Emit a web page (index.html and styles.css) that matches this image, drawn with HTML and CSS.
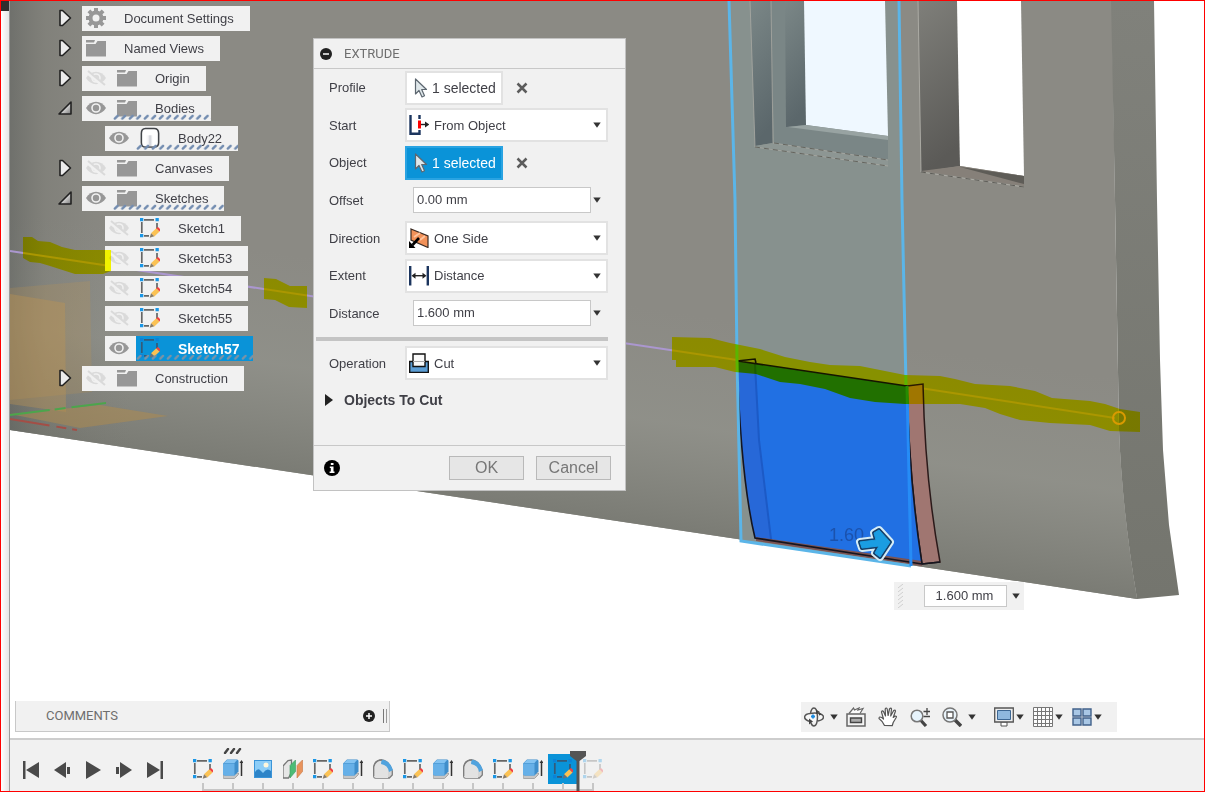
FILE: index.html
```html
<!DOCTYPE html>
<html lang="en">
  <head>
    <meta charset="UTF-8" />
    <meta name="viewport" content="width=device-width, initial-scale=1.0" />
    <title>Extrude</title>
    <link rel="stylesheet" href="styles.css">
  </head>
  <body>
    <!-- Icon definitions -->
    <svg class="defs" aria-hidden="true">
      <defs>
        <linearGradient id="arrowFill" x1="0" y1="0" x2="1" y2="1">
          <stop offset="0.4" stop-color="#eee" />
          <stop offset="1" stop-color="#777" />
        </linearGradient>
        <linearGradient id="bodyFill" x1="0" y1="0" x2="1" y2="0">
          <stop offset="0" stop-color="#fff" />
          <stop offset="0.3" stop-color="#f4f4f6" />
          <stop offset="0.5" stop-color="#cfd1d8" />
          <stop offset="0.8" stop-color="#fff" />
        </linearGradient>
        <pattern id="hatch" width="7.5" height="6" patternUnits="userSpaceOnUse">
          <path d="M1.8 4.6 4.6 1.8" stroke="#728cb0" stroke-width="2.4" stroke-linecap="round" />
        </pattern>
        <pattern id="hatchGray" width="7.5" height="6" patternUnits="userSpaceOnUse">
          <path d="M1.8 4.6 4.6 1.8" stroke="#7c93a5" stroke-width="2.2" stroke-linecap="round" />
        </pattern>
      </defs>
      <symbol id="i-closed" viewBox="0 0 14 18">
        <path d="M2 1.5h2.5L12.500 9 4.500 16.500H2z" fill="#ececec" stroke="#222" stroke-width="1.6" stroke-linejoin="round" />
      </symbol>
      <symbol id="i-open" viewBox="0 0 14 18">
        <path d="M13 3v12H1z" fill="url(#arrowFill)" stroke="#222" stroke-width="1.6" stroke-linejoin="round" />
      </symbol>
      <symbol id="i-gear" viewBox="0 0 20 20">
        <circle cx="10" cy="10" r="5.5" fill="none" stroke="#979797" stroke-width="4" />
        <g stroke="#979797" stroke-width="4">
          <path d="M10 0v4M10 16v4M0 10h4M16 10h4M2.9 2.9l3 3M14.1 14.1l3 3M2.9 17.1l3-3M14.1 5.9l3-3" />
        </g>
      </symbol>
      <symbol id="i-folder" viewBox="0 0 20 20">
        <path d="M0 6h9.500l2-3H20v15.500H0z" fill="#979797" />
        <path d="M0 2h9L8 4.500H0z" fill="#979797" />
      </symbol>
      <symbol id="i-eye" viewBox="0 0 20 20">
        <path d="M0 10C5 1.800 15 1.800 20 10 15 18.200 5 18.200 0 10z" fill="#979797" />
        <circle cx="10" cy="10" r="4" fill="none" stroke="#f1f1f1" stroke-width="1.6" />
      </symbol>
      <symbol id="i-eye-off" viewBox="0 0 20 20">
        <path d="M0 10C5 1.800 15 1.800 20 10 15 18.200 5 18.200 0 10z" fill="#dadada" />
        <circle cx="10" cy="10" r="4" fill="none" stroke="#f1f1f1" stroke-width="1.6" />
        <path d="M1 4 18 18" stroke="#f1f1f1" stroke-width="4" />
        <path d="M2 3 19 17" stroke="#dadada" stroke-width="2" />
      </symbol>
      <symbol id="i-body" viewBox="0 0 22 24">
        <path d="M6 1.500h9.500Q20.500 1.500 20.500 7v10q0 5-5 5H6q-4.500 0-4.500-5V7Q1.500 1.500 6 1.500z" fill="#fff" stroke="#414449" stroke-width="1.7" />
        <path d="M6 9h10v12H6z" fill="url(#bodyFill)" />
      </symbol>
      <symbol id="i-sketch" viewBox="0 0 20 20">
        <path d="M4 1.800h10M1.800 4v11M17 5v6M4 17.800h5" fill="none" stroke="#666" stroke-width="1.7" />
        <path d="M0 0h3.300v3.300H0zM15.500 0h3.300v3.300h-3.300zM0 16h3.300v3.300H0z" fill="#1996e6" />
        <path d="m11 15.300 5.300-5 3.300 3.300-5.300 5z" fill="#fbc254" />
        <path d="m16.300 10.300 1.700-1.200 2.500 2.500-1 2z" fill="#f33f3f" />
        <path d="m11 15.300-1.300 4.500 4.600-1.500z" fill="#8a7c68" />
      </symbol>
      <symbol id="i-sketch-dark" viewBox="0 0 20 20">
        <path d="M4 1.800h10M1.800 4v11M17 5v6M4 17.800h5" fill="none" stroke="#355a78" stroke-width="1.7" />
        <path d="M0 0h3.300v3.300H0zM15.500 0h3.300v3.300h-3.300zM0 16h3.300v3.300H0z" fill="#0a82d8" />
        <path d="m11 15.300 5.300-5 3.300 3.300-5.300 5z" fill="#fbc254" />
        <path d="m16.300 10.300 1.700-1.200 2.500 2.500-1 2z" fill="#f33f3f" />
        <path d="m11 15.300-1.300 4.500 4.600-1.500z" fill="#6a7078" />
      </symbol>
      <symbol id="i-extrude" viewBox="0 0 20 20">
        <path d="M0 16v2.500q0 1 1 1h10.500l4-4V14z" fill="#c6c6c6" stroke="#999" stroke-width="0.8" />
        <path d="M0 4.500 4 0.500h10q1.500 0 1.500 1.500v10.500l-4 4H2q-2 0-2-2z" fill="#3f8ecb" />
        <path d="M0 5.500Q0 4.500 1 4.500h10.500v12H2q-2 0-2-2z" fill="#66b0e8" />
        <path d="M1 4 4 1h10l-2.500 3z" fill="#83c3f2" />
        <path d="M18.500 3v14" stroke="#333" stroke-width="1.5" />
        <path d="m16.500 4 2-3 2 3z" fill="#333" />
      </symbol>
      <symbol id="i-canvas" viewBox="0 0 20 20">
        <path d="M1 1h18v18H1z" fill="#3a94d8" />
        <path d="M2 2h16v13H2z" fill="#8ccdf7" />
        <path d="M2 13q3-5 6-1l2 2q4-6 8-2v6H2z" fill="#2d84c8" />
        <circle cx="13" cy="6" r="2.5" fill="#fff7dc" />
      </symbol>
      <symbol id="i-plane" viewBox="0 0 20 20">
        <path d="M0 7 5 1.500 8.500 1v12l-3 6H0z" fill="#e6e6e6" stroke="#777" stroke-width="1.3" />
        <path d="M7 6.500 12.500 1v11.500L7 19z" fill="#4dbc76" stroke="#3a9a5f" stroke-width="0.6" />
        <path d="M14 6.500 19.500 1v11.500L14 19z" fill="#e9935c" stroke="#c87640" stroke-width="0.6" />
      </symbol>
      <symbol id="i-fillet" viewBox="0 0 20 20">
        <path d="M0.700 17V8Q2 1 9 1q7 1 10.300 11v4l-3 3H2.500q-1.800 0-1.800-2z" fill="#d5d5d5" stroke="#7d7d7d" stroke-width="1.3" />
        <path d="M1 7q3-6 9-6l5 8v10H3q-2 0-2-2z" fill="#e2e2e2" />
        <path d="M8.500 0.700Q17 1 20 11l-4 2Q15 6 8 5z" fill="#51a3de" />
        <path d="M0.700 17V8Q2 1 9 1" fill="none" stroke="#7d7d7d" stroke-width="1.3" />
      </symbol>
      <symbol id="i-caret" viewBox="0 0 8 6">
        <path d="M0.300 0.500h7.400L4 5.700z" fill="#333" />
      </symbol>
      <symbol id="i-cursor" viewBox="0 0 14 20">
        <path d="M1.500 1v15l3.500-3.500 3 6.500 2.500-1.200-2.800-6.300h4.800z" fill="#dfe7ea" stroke="#5d6770" stroke-width="1.2" stroke-linejoin="round" />
      </symbol>
      <symbol id="i-x" viewBox="0 0 12 12">
        <path d="m1.500 1.500 9 9M10.500 1.500l-9 9" stroke="#5c5c5c" stroke-width="2.5" />
      </symbol>
      <symbol id="i-from-object" viewBox="0 0 20 20">
        <path d="M1.500 0v18.800h9V15M10.500 0v4" fill="none" stroke="#1c355e" stroke-width="2.4" />
        <path d="M10.500 5.500v8" stroke="#f00" stroke-width="3" />
        <path d="M12 9.500h5" stroke="#222" stroke-width="1.4" />
        <path d="m16 6.500 4.500 3-4.500 3z" fill="#222" />
      </symbol>
      <symbol id="i-one-side" viewBox="0 0 20 20">
        <path d="m2 1 17 7v11.500L2 12z" fill="#f29158" stroke="#3a2a22" stroke-width="1.2" />
        <path d="m5 9 6-4M11 12l5-4" stroke="#ffc49d" stroke-width="2" />
        <path d="m10 10-6.500 7" stroke="#000" stroke-width="2.6" />
        <path d="M0 20v-7l6.500 7z" fill="#000" />
      </symbol>
      <symbol id="i-distance" viewBox="0 0 20 20">
        <path d="M1.200 0v19.500M18.800 0v19.500" stroke="#1c355e" stroke-width="2.4" />
        <path d="M4 9.700h12" stroke="#222" stroke-width="1.4" />
        <path d="m2.500 9.700 4-3v6zM17.500 9.700l-4-3v6z" fill="#222" />
      </symbol>
      <symbol id="i-cut" viewBox="0 0 20 20">
        <path d="M0.700 8.500h18.600v11H0.700z" fill="#5b9dd4" stroke="#111" stroke-width="1.4" />
        <path d="M4 1h12v12.500H4z" fill="#fafafa" stroke="#111" stroke-width="1.4" />
        <path d="M4 8.500h12" stroke="#aaa" />
      </symbol>
      <symbol id="i-orbit" viewBox="0 0 20 20">
        <path d="M6 14.500Q0.500 13 .6 10 1 7 6 6.500q5-1 9 0 4.500 1 4.500 3.500 0 3-5.500 4" fill="#f8f8f8" stroke="#555" stroke-width="1.5" />
        <path d="M6.500 6Q7.500 1 10 1q3 0 3.500 8.500 0 9-3.500 9.500-2 0-3-3" fill="none" stroke="#555" stroke-width="1.5" />
        <path d="m5 11.500 4 3-4 3zM12 2.500l4 2.500-4 2zM15 5l3 2.500-3 1z" fill="#444" />
        <path d="M9 7.500v4M7 9.500h4" stroke="#1b8ae0" stroke-width="1.8" />
      </symbol>
      <symbol id="i-look" viewBox="0 0 20 20">
        <path d="M3 6.500 7.500 1l1 2L13 1l-1 2 5-1.500-3 5" fill="#fafafa" stroke="#666" stroke-width="1.2" />
        <path d="M1 7h18v12H1z" fill="#f4f4f4" stroke="#666" stroke-width="1.5" />
        <path d="M4.500 11h11v4.500h-11z" fill="#aaa" stroke="#444" stroke-width="1.4" />
      </symbol>
      <symbol id="i-hand" viewBox="0 0 20 20">
        <path d="M6.500 18.500Q4.500 14 1 11.500q0-2.500 2.800-.9L5.500 12 3.500 5q.5-2 2-.5L7.500 9l-.3-7q1-2 2 0l.9 6.500L11.500 2q1.500-1.800 2 0L12.700 9l3-5.500q1.500-1 1.800.5l-2.300 6.500 2-1.500q1.800 0 1 1.500l-3 5-1 3.200z" fill="#fff" stroke="#555" stroke-width="1.2" stroke-linejoin="round" />
      </symbol>
      <symbol id="i-zoom" viewBox="0 0 20 20">
        <path d="m10.500 13 5.500 6" stroke="#444" stroke-width="3.2" />
        <circle cx="7" cy="9" r="5.800" fill="#e6f3fc" stroke="#777" stroke-width="1.5" />
        <path d="M17 1v7M13.500 4.500h7M13.500 9.500h7" stroke="#444" stroke-width="1.3" />
      </symbol>
      <symbol id="i-fit" viewBox="0 0 20 20">
        <path d="m13 13 6 6" stroke="#444" stroke-width="3.5" />
        <circle cx="8" cy="8" r="7" fill="#e9f3fa" stroke="#777" stroke-width="1.5" />
        <path d="M5 5h6v6H5z" fill="#fff" stroke="#555" stroke-width="1.3" />
      </symbol>
      <symbol id="i-display" viewBox="0 0 20 20">
        <path d="M7 15h6v4H7z" fill="#fff" stroke="#555" />
        <path d="M0.700 1h18.600v14H0.700z" fill="#eee" stroke="#555" stroke-width="1.3" />
        <path d="M3.500 3.500h13v9h-13z" fill="#8fb8de" stroke="#3d6793" />
      </symbol>
      <symbol id="i-grid" viewBox="0 0 20 20">
        <path d="M0.500 0.500h19v19h-19z" fill="#fdfdfd" />
        <path d="M0.500 0.500h19v19h-19zM4.500 0v20M8.500 0v20M12.500 0v20M16.500 0v20M0 4.500h20M0 8.500h20M0 12.500h20M0 16.500h20" fill="none" stroke="#777" />
      </symbol>
      <symbol id="i-views" viewBox="0 0 20 20">
        <path d="M1 2h8v7H1zM11 2h8v7h-8zM1 11h8v7H1zM11 11h8v7h-8z" fill="#a9c7e5" stroke="#41618a" stroke-width="1.4" />
      </symbol>
    </svg>

    <div class="app">
      <div class="edge"></div>
      <main class="main">
        <div class="viewport">
          <!-- 3D model -->
          <svg class="scene" viewBox="10 1 1194 737" preserveAspectRatio="xMinYMin slice">
            <defs>
              <linearGradient id="wallEdge" x1="0" y1="0" x2="1" y2="0">
                <stop offset="0" stop-color="#585b58" stop-opacity="0.55" />
                <stop offset="0.3" stop-color="#64665f" stop-opacity="0.25" />
                <stop offset="1" stop-color="#6f716c" stop-opacity="0" />
              </linearGradient>
              <linearGradient id="wallFoot" gradientUnits="userSpaceOnUse" x1="600" y1="300" x2="567" y2="520">
                <stop offset="0" stop-color="#90918a" stop-opacity="0" />
                <stop offset="0.5" stop-color="#90918a" stop-opacity="0.8" />
                <stop offset="1" stop-color="#797a73" />
              </linearGradient>
              <linearGradient id="side" x1="0" y1="0" x2="0" y2="1">
                <stop offset="0" stop-color="#80817b" />
                <stop offset="1" stop-color="#74756e" />
              </linearGradient>
              <linearGradient id="jamb" x1="0" y1="0" x2="0.2" y2="1">
                <stop offset="0" stop-color="#7f7f7a" />
                <stop offset="1" stop-color="#5b5a57" />
              </linearGradient>
              <linearGradient id="jambBlue" x1="0" y1="0" x2="0.2" y2="1">
                <stop offset="0" stop-color="#7b8787" />
                <stop offset="1" stop-color="#5b676b" />
              </linearGradient>
            </defs>
            <path d="M10 1H1112L1115 200 1119 430Q1122 510 1137 599L10 430z" fill="#8b8a84" />
            <path d="M10 1H1112L1115 200 1119 430Q1122 510 1137 599L10 430z" fill="url(#wallFoot)" />
            <path d="M10 1h120v447L10 430z" fill="url(#wallEdge)" />
            <path d="M1111 1h43l3 199 3 160 3 90 6 75 10 70-42 4Q1122 510 1119 430L1115 200z" fill="url(#side)" />

            <!-- origin planes and axes -->
            <path d="m10 288 80-7 2 111-82 8z" fill="#c2974f" fill-opacity="0.22" />
            <path d="m10 294 55 9 1 109-56-8z" fill="#c2974f" fill-opacity="0.36" />
            <path d="m10 414 90-9 68 11-88 12z" fill="#b18c4c" fill-opacity="0.5" />
            <path d="m10 415 96-12" stroke="#4ca54c" stroke-width="2" stroke-dasharray="40 5 11 6" />
            <path d="m10 419 67 11" stroke="#a34e46" stroke-width="2" stroke-dasharray="40 7 10 6" />

            <!-- selected profile region -->
            <path d="M729 1h170l3 199 3 130 5 236-169-25-4-211-2-130z" fill="#87918e" />

            <!-- windows -->
            <path d="M750 1h22l1 142-18 3z" fill="url(#jambBlue)" />
            <path d="M771 1h15l2 126 18-2 82 12v23l-114-17z" fill="#7a8686" />
            <path d="M785 1h20l1 124-20 2z" fill="url(#jambBlue)" />
            <path d="M804 1h81l3 135-82-11z" fill="#eff8ff" />
            <path d="m788 127 18-2 82 11v4z" fill="#98a3a2" />
            <path d="m755 146 18-3 115 17v6z" fill="#8d9693" />
            <path d="M750 1 755 147l133 19M771 1l2 142 115 17" fill="none" stroke="#a9aaa3" stroke-width="0.8" />
            <path d="m755 147 133 19M774 143l114 17" fill="none" stroke="#55564f" stroke-width="0.8" stroke-dasharray="5 4" />
            <path d="M918 1h39l3 165-39 6z" fill="url(#jamb)" />
            <path d="M957 1h64l3 175-64-10z" fill="#fff" />
            <path d="m921 171 39-5 64 10v10z" fill="#868079" />
            <path d="m960 167 64 9v8z" fill="#5e5c57" />
            <path d="m918 1 3 171 103 15" fill="none" stroke="#b0afa8" stroke-width="0.9" />
            <path d="m921 172 103 15" fill="none" stroke="#55544f" stroke-width="0.9" stroke-dasharray="5 4" />

            <!-- sketch line -->
            <path d="m10 251 727 109M907 386l208 32" fill="none" stroke="#ab97cf" stroke-width="2" />
            <circle cx="1119" cy="418" r="6" fill="none" stroke="#d99a45" stroke-width="2" />

            <!-- extruded body -->
            <path d="m907 386 16-2Q925 480 940 562l-18 2Q909 480 907 386z" fill="#a07671" stroke="#2b1a1a" stroke-width="1.5" />
            <path d="m737 361 170 25Q909 480 922 564L755 538Q741 480 737 361z" fill="#2170e3" />
            <path d="m755 364 4 76 12 99-16-1Q741 480 737 361z" fill="#2768d8" />
            <path d="m755 364 4 76 12 99" fill="none" stroke="#1c5ac6" stroke-width="2" />
            <path d="m756 537 166 24v5l-166-25z" fill="#7b5454" />
            <path d="M737 361Q741 480 755 538l167 26 18-2M907 386Q909 480 922 564M737 361l18-2 1 4M738 361l169 25" fill="none" stroke="#15151f" stroke-width="1.6" />
            <path d="m729 1 6 199 2 160 4 181 170 25" fill="none" stroke="#5bb5e8" stroke-width="3" />
            <path d="m899 1 3 199 4 185" fill="none" stroke="#5bb5e8" stroke-width="3" />
            <path d="m907 386 4 180" fill="none" stroke="#268cf6" stroke-width="3" />
            <text class="scene-text" x="829" y="541">1.60</text>
            <g stroke-linejoin="round">
              <path id="grab" d="m860 542 16-2-2-7 5-3 11 12-10 15-5-4 4-7-17 2z" fill="none" stroke="#d5ecf6" stroke-width="8" />
              <path d="m860 542 16-2-2-7 5-3 11 12-10 15-5-4 4-7-17 2z" fill="#1a9de2" stroke="#153f69" stroke-width="4" />
              <path d="m860 542 16-2-2-7 5-3 11 12-10 15-5-4 4-7-17 2z" fill="#1a9de2" stroke="#1a9de2" stroke-width="1" />
            </g>
          </svg>

          <ul class="tree">
            <li class="node">
              <svg class="toggle"><use href="#i-closed" /></svg>
              <div class="pill"><svg class="icon"><use href="#i-gear" /></svg><span>Document Settings</span></div>
            </li>
            <li class="node">
              <svg class="toggle"><use href="#i-closed" /></svg>
              <div class="pill"><svg class="icon"><use href="#i-folder" /></svg><span>Named Views</span></div>
            </li>
            <li class="node">
              <svg class="toggle"><use href="#i-closed" /></svg>
              <div class="pill"><svg class="icon"><use href="#i-eye-off" /></svg><svg class="icon"><use href="#i-folder" /></svg><span>Origin</span></div>
            </li>
            <li class="node">
              <svg class="toggle"><use href="#i-open" /></svg>
              <div class="pill"><svg class="icon"><use href="#i-eye" /></svg><svg class="icon"><use href="#i-folder" /></svg><span>Bodies</span><svg class="hatch"><rect width="100%" height="6" fill="url(#hatch)" /></svg></div>
            </li>
            <li class="node child">
              <div class="pill"><svg class="icon"><use href="#i-eye" /></svg><svg class="icon icon-body"><use href="#i-body" /></svg><span>Body22</span><svg class="hatch"><rect width="100%" height="6" fill="url(#hatch)" /></svg></div>
            </li>
            <li class="node">
              <svg class="toggle"><use href="#i-closed" /></svg>
              <div class="pill"><svg class="icon"><use href="#i-eye-off" /></svg><svg class="icon"><use href="#i-folder" /></svg><span>Canvases</span></div>
            </li>
            <li class="node">
              <svg class="toggle"><use href="#i-open" /></svg>
              <div class="pill"><svg class="icon"><use href="#i-eye" /></svg><svg class="icon"><use href="#i-folder" /></svg><span>Sketches</span><svg class="hatch"><rect width="100%" height="6" fill="url(#hatch)" /></svg></div>
            </li>
            <li class="node child">
              <div class="pill"><svg class="icon"><use href="#i-eye-off" /></svg><svg class="icon"><use href="#i-sketch" /></svg><span>Sketch1</span></div>
            </li>
            <li class="node child">
              <div class="pill"><svg class="icon"><use href="#i-eye-off" /></svg><svg class="icon"><use href="#i-sketch" /></svg><span>Sketch53</span></div>
            </li>
            <li class="node child">
              <div class="pill"><svg class="icon"><use href="#i-eye-off" /></svg><svg class="icon"><use href="#i-sketch" /></svg><span>Sketch54</span></div>
            </li>
            <li class="node child">
              <div class="pill"><svg class="icon"><use href="#i-eye-off" /></svg><svg class="icon"><use href="#i-sketch" /></svg><span>Sketch55</span></div>
            </li>
            <li class="node child">
              <div class="pill selected"><svg class="icon"><use href="#i-eye" /></svg><svg class="icon"><use href="#i-sketch-dark" /></svg><span>Sketch57</span><svg class="hatch"><rect width="100%" height="6" fill="url(#hatchGray)" /></svg></div>
            </li>
            <li class="node">
              <svg class="toggle"><use href="#i-closed" /></svg>
              <div class="pill"><svg class="icon"><use href="#i-eye-off" /></svg><svg class="icon"><use href="#i-folder" /></svg><span>Construction</span></div>
            </li>
          </ul>

          <!-- marker pen strokes -->
          <svg class="scene marker" viewBox="10 1 1194 737" preserveAspectRatio="xMinYMin slice">
            <path d="M23 237h9l6 4 12 1 12 5 13 3h36v21l-8 3H75l-25-8-10-3-10-1-7-4z" />
            <path d="m264 278 12 1 14 7h17v22l-18-1-14-7-11-1z" />
            <path d="m672 337 38 1 20 5 30 6 25 8 25 5 20 3 30 1 25 5 20 4 35 1 15 3 20 5 35 2 25 5 17 7 38 3 15 3 15 5 20 3v20l-30-1-20-6-40-2-30-3-20-6-15-6-25-4h-55l-30-2-25-4-25-9-25-5-20-2-24-8-21-2-20-5h-39v-7h-4z" />
          </svg>

          <form class="dialog">
            <div class="dialog-head">
              <svg class="dot" viewBox="0 0 12 12"><circle cx="6" cy="6" r="6" fill="#222" /><path d="M3 6h6" stroke="#fff" stroke-width="1.5" /></svg>
              <h1>EXTRUDE</h1>
            </div>
            <div class="fields">
              <div class="field">
                <label for="profile">Profile</label>
                <button type="button" id="profile" class="pick"><svg><use href="#i-cursor" /></svg>1 selected</button>
                <button type="button" class="clear" aria-label="Clear profile"><svg><use href="#i-x" /></svg></button>
              </div>
              <div class="field">
                <label for="start">Start</label>
                <div class="combo"><svg class="icon"><use href="#i-from-object" /></svg><select id="start"><option>From Object</option></select><svg class="caret"><use href="#i-caret" /></svg></div>
              </div>
              <div class="field">
                <label for="object">Object</label>
                <button type="button" id="object" class="pick active"><svg><use href="#i-cursor" /></svg>1 selected</button>
                <button type="button" class="clear" aria-label="Clear object"><svg><use href="#i-x" /></svg></button>
              </div>
              <div class="field">
                <label for="offset">Offset</label>
                <input type="text" id="offset" value="0.00 mm"><svg class="caret"><use href="#i-caret" /></svg>
              </div>
              <div class="field">
                <label for="direction">Direction</label>
                <div class="combo"><svg class="icon"><use href="#i-one-side" /></svg><select id="direction"><option>One Side</option></select><svg class="caret"><use href="#i-caret" /></svg></div>
              </div>
              <div class="field">
                <label for="extent">Extent</label>
                <div class="combo"><svg class="icon"><use href="#i-distance" /></svg><select id="extent"><option>Distance</option></select><svg class="caret"><use href="#i-caret" /></svg></div>
              </div>
              <div class="field">
                <label for="distance">Distance</label>
                <input type="text" id="distance" value="1.600 mm"><svg class="caret"><use href="#i-caret" /></svg>
              </div>
            </div>
            <hr>
            <div class="field">
              <label for="operation">Operation</label>
              <div class="combo"><svg class="icon"><use href="#i-cut" /></svg><select id="operation"><option>Cut</option></select><svg class="caret"><use href="#i-caret" /></svg></div>
            </div>
            <button type="button" class="section">
              <svg viewBox="0 0 8 12"><path d="M0 0v12l8-6z" fill="#222" /></svg>
              Objects To Cut
            </button>
            <div class="dialog-foot">
              <svg class="info" viewBox="0 0 16 16"><circle cx="8" cy="8" r="8" fill="#000" /><path d="M6.800 3h2.700v2H6.800zM5.800 6.500h3.700v5h1v1.500H5.600v-1.500h1.200v-3.500h-1z" fill="#fff" /></svg>
              <button type="button" class="btn">OK</button>
              <button type="button" class="btn">Cancel</button>
            </div>
          </form>

          <div class="float-input">
            <svg class="grip" viewBox="0 0 6 24"><path d="m0 4 5-4M0 8l5-4M0 12l5-4M0 16l5-4M0 20l5-4M0 24l5-4" stroke="#cfcfcf" /></svg>
            <input type="text" value="1.600 mm" aria-label="Distance">
            <svg class="caret"><use href="#i-caret" /></svg>
          </div>

          <div class="bottom-bar">
            <div class="comments">
              <h2>COMMENTS</h2>
              <button type="button" aria-label="Add comment"><svg class="dot" viewBox="0 0 12 12"><circle cx="6" cy="6" r="6" fill="#222" /><path d="M3 6h6M6 3v6" stroke="#fff" stroke-width="1.5" /></svg></button>
              <span class="handle"></span>
            </div>
            <div class="nav">
              <button type="button" aria-label="Orbit"><svg class="icon"><use href="#i-orbit" /></svg><svg class="caret"><use href="#i-caret" /></svg></button>
              <div class="nav-group">
                <button type="button" aria-label="Look at"><svg class="icon"><use href="#i-look" /></svg></button>
                <button type="button" aria-label="Pan"><svg class="icon"><use href="#i-hand" /></svg></button>
                <button type="button" aria-label="Zoom"><svg class="icon"><use href="#i-zoom" /></svg></button>
                <button type="button" aria-label="Fit"><svg class="icon"><use href="#i-fit" /></svg><svg class="caret"><use href="#i-caret" /></svg></button>
              </div>
              <div class="nav-group tight">
                <button type="button" aria-label="Display settings"><svg class="icon"><use href="#i-display" /></svg><svg class="caret"><use href="#i-caret" /></svg></button>
                <button type="button" aria-label="Grid and snaps"><svg class="icon"><use href="#i-grid" /></svg><svg class="caret"><use href="#i-caret" /></svg></button>
                <button type="button" aria-label="Viewports"><svg class="icon"><use href="#i-views" /></svg><svg class="caret"><use href="#i-caret" /></svg></button>
              </div>
            </div>
          </div>
        </div>

        <div class="timeline">
          <div class="player">
            <button type="button" aria-label="First"><svg viewBox="0 0 16 18"><path d="M0 0h2.500v18H0zM16 1v16L3 9z" /></svg></button>
            <button type="button" aria-label="Previous"><svg viewBox="0 0 16 18"><path d="M12 1v16L0 9zM13 6h3v7h-3z" /></svg></button>
            <button type="button" aria-label="Play"><svg viewBox="0 0 16 18"><path d="M1 0v18l15-9z" /></svg></button>
            <button type="button" aria-label="Next"><svg viewBox="0 0 16 18"><path d="M4 1v16l12-8zM0 6h3v7H0z" /></svg></button>
            <button type="button" aria-label="Last"><svg viewBox="0 0 16 18"><path d="M13.500 0H16v18h-2.500zM0 1v16l13-8z" /></svg></button>
          </div>
          <ol class="features">
            <li><svg class="icon"><use href="#i-sketch" /></svg></li>
            <li><svg class="icon"><use href="#i-extrude" /></svg><svg class="ticks" viewBox="0 0 20 6"><path d="m2 5 3-4M8 5l3-4M14 5l3-4" stroke="#444" stroke-width="2.4" stroke-linecap="round" /></svg></li>
            <li><svg class="icon"><use href="#i-canvas" /></svg></li>
            <li><svg class="icon"><use href="#i-plane" /></svg></li>
            <li><svg class="icon"><use href="#i-sketch" /></svg></li>
            <li><svg class="icon"><use href="#i-extrude" /></svg></li>
            <li><svg class="icon"><use href="#i-fillet" /></svg></li>
            <li><svg class="icon"><use href="#i-sketch" /></svg></li>
            <li><svg class="icon"><use href="#i-extrude" /></svg></li>
            <li><svg class="icon"><use href="#i-fillet" /></svg></li>
            <li><svg class="icon"><use href="#i-sketch" /></svg></li>
            <li><svg class="icon"><use href="#i-extrude" /></svg></li>
            <li class="current"><svg class="icon"><use href="#i-sketch-dark" /></svg><svg class="playhead" viewBox="0 0 16 40"><path d="M0 0h16v5L9.500 10v30h-3V10L0 5z" fill="#555" /></svg></li>
            <li class="future"><svg class="icon"><use href="#i-sketch" /></svg></li>
          </ol>
        </div>
      </main>
    </div>
  </body>
</html>
```
FILE: styles.css
```css
:root {
  --panel: #f1f1f1;
  --line: #c8c8c8;
  --accent: #0a93d8;
  --text: #3f3f46;
  --muted: #6e6e6e;
}

* {
  box-sizing: border-box;
}

body {
  margin: 0;
  font-family: "Liberation Sans", Arial, sans-serif;
  font-size: 13px;
  line-height: 16px;
  color: var(--text);
  background: #fff;
}

button,
input,
select {
  font: inherit;
  color: inherit;
}

button {
  padding: 0;
  border: none;
  background: none;
  cursor: pointer;
}

svg {
  display: block;
  flex: none;
}

.defs {
  position: absolute;
  width: 0;
  height: 0;
}

.icon {
  width: 20px;
  height: 20px;
  overflow: visible;
}

.caret {
  width: 8px;
  height: 6px;
}

.dot {
  width: 12px;
  height: 12px;
}

.app {
  display: flex;
  height: 100vh;
  border: 1px solid #f00;
  overflow: hidden;
}

.edge {
  width: 9px;
  border-right: 1px solid #9c9c9c;
  background: linear-gradient(#2e2e2e 10px, transparent 10px),
    linear-gradient(to right, #fff, #e6e6e6);
}

.main {
  flex: 1;
  min-width: 0;
  display: flex;
  flex-direction: column;
}

.viewport {
  position: relative;
  flex: 1;
  overflow: hidden;
}

.scene {
  position: absolute;
  inset: 0;
  width: 100%;
  height: 100%;
}

.scene-text {
  font-size: 18px;
  fill: #1b52ad;
}

.marker {
  fill: #ff0;
  mix-blend-mode: multiply;
  pointer-events: none;
}

/* Browser tree */
.tree {
  position: absolute;
  top: 2px;
  left: 48px;
  margin: 0;
  padding: 0;
  list-style: none;
}

.node {
  display: flex;
  align-items: center;
  height: 30px;
  gap: 10px;
}

.node.child {
  padding-left: 47px;
}

.toggle {
  width: 14px;
  height: 18px;
}

.pill {
  position: relative;
  display: flex;
  align-items: center;
  height: 25px;
  padding: 0 16px 0 4px;
  background: var(--panel);
}

.pill .icon + .icon {
  margin-left: 11px;
}

.pill span {
  margin-left: 18px;
  padding-top: 1px;
}

.icon-body {
  height: 22px;
}

.hatch {
  position: absolute;
  left: 31px;
  right: 0;
  bottom: 1px;
  width: calc(100% - 31px);
  height: 6px;
}

.pill.selected {
  padding-right: 14px;
  color: #fff;
  font-size: 14px;
  font-weight: bold;
  background: linear-gradient(to right, var(--panel) 31px, var(--accent) 31px);
}

/* Extrude dialog */
.dialog {
  position: absolute;
  top: 37px;
  left: 303px;
  width: 313px;
  border: 1px solid #c2c2c2;
  background: var(--panel);
}

.dialog-head {
  display: flex;
  align-items: center;
  gap: 12px;
  height: 30px;
  padding-left: 6px;
  border-bottom: 1px solid var(--line);
}

h1,
h2 {
  margin: 0;
  font-family: Roboto, "Liberation Sans", sans-serif;
  font-size: 13px;
  font-weight: normal;
  color: var(--muted);
}

.fields {
  display: grid;
  grid-template-columns: 100%;
  grid-auto-rows: 1fr;
  height: 263px;
}

.field {
  display: flex;
  align-items: center;
  padding: 0 17px 0 15px;
}

.field label {
  flex: none;
  width: 76px;
  padding-top: 1px;
}

.pick {
  display: flex;
  align-items: center;
  gap: 4px;
  width: 98px;
  height: 34px;
  padding-left: 7px;
  border: 2px solid #e2e2e2;
  background: #fff;
  font-size: 14px;
  white-space: nowrap;
}

.pick svg {
  width: 14px;
  height: 20px;
}

.pick.active {
  border-color: #29a3e2;
  background: var(--accent);
  color: #fff;
}

.clear {
  margin-left: 13px;
}

.clear svg {
  width: 12px;
  height: 12px;
}

.combo {
  flex: 1;
  min-width: 0;
  display: flex;
  align-items: center;
  height: 34px;
  padding: 0 5px 0 2px;
  border: 2px solid #e2e2e2;
  background: #fff;
}

.combo select {
  flex: 1;
  min-width: 0;
  padding: 1px 0 0 5px;
  border: none;
  background: none;
  appearance: none;
}

.field input {
  flex: 1;
  min-width: 0;
  height: 26px;
  margin-left: 8px;
  padding: 0 3px 1px;
  border: 1px solid var(--line);
  background: #fff;
}

.field input + .caret {
  margin: 0 7px 0 2px;
}

.dialog hr {
  height: 4px;
  margin: 5px 17px 5px 2px;
  border: none;
  background: #c4c4c4;
}

.section {
  display: flex;
  align-items: center;
  gap: 11px;
  height: 40px;
  padding-left: 11px;
  font-size: 14px;
  font-weight: bold;
}

.section svg {
  width: 8px;
  height: 12px;
}

.dialog-foot {
  display: flex;
  align-items: center;
  gap: 12px;
  height: 45px;
  margin-top: 25px;
  padding: 0 14px 0 10px;
  border-top: 1px solid var(--line);
}

.info {
  width: 16px;
  height: 16px;
  margin-right: auto;
}

.btn {
  width: 75px;
  height: 24px;
  border: 1px solid #b9b9b9;
  background: #e6e6e6;
  color: #777;
  font-size: 16px;
}

/* In-canvas value box */
.float-input {
  position: absolute;
  top: 581px;
  left: 884px;
  display: flex;
  align-items: center;
  width: 130px;
  height: 28px;
  padding: 0 4px;
  background: var(--panel);
}

.grip {
  width: 6px;
  height: 24px;
}

.float-input input {
  width: 83px;
  height: 22px;
  margin: 0 5px 0 20px;
  padding: 0 2px 2px 0;
  border: 1px solid var(--line);
  background: #fff;
  text-align: center;
}

/* Comments and navigation bar */
.bottom-bar {
  position: absolute;
  left: 5px;
  right: 87px;
  bottom: 6px;
  display: flex;
  justify-content: space-between;
  align-items: center;
}

.comments {
  display: flex;
  align-items: center;
  width: 375px;
  height: 31px;
  padding: 0 2px 0 30px;
  border: 1px solid var(--line);
  border-top: none;
  background: var(--panel);
}

.comments h2 {
  flex: 1;
}

.handle {
  width: 4px;
  height: 14px;
  margin-left: 8px;
  border-left: 1px solid #777;
  border-right: 1px solid #999;
}

.nav {
  display: flex;
  align-items: center;
  gap: 8px;
  height: 30px;
  padding: 0 15px 0 3px;
  background: var(--panel);
}

.nav button {
  display: flex;
  align-items: center;
  gap: 6px;
}

.nav-group {
  display: flex;
  gap: 12px;
}

.nav-group.tight {
  gap: 9px;
  margin-left: 10px;
}

.tight button {
  gap: 2px;
}

/* Timeline */
.timeline {
  display: flex;
  height: 53px;
  border-top: 2px solid #cdcdcd;
  background: var(--panel);
}

.player {
  display: flex;
  align-items: center;
  margin: 8px 18px 0 5px;
  height: 44px;
}

.player button {
  display: flex;
  justify-content: center;
  width: 31px;
}

.player svg {
  width: 16px;
  height: 18px;
  fill: #4a4a4a;
}

.features {
  position: relative;
  display: flex;
  margin: 0;
  padding: 0;
  list-style: none;
}

.features::after {
  content: "";
  position: absolute;
  left: 14px;
  right: 14px;
  bottom: 0;
  height: 2px;
  background: #c6c6c6;
}

.features li {
  position: relative;
  display: flex;
  flex-direction: column;
  align-items: center;
  justify-content: space-between;
  width: 30px;
  padding-top: 19px;
}

.features li::after {
  content: "";
  width: 2px;
  height: 8px;
  background: #c6c6c6;
}

.features .current {
  background: linear-gradient(var(--accent), var(--accent)) 0 14px / 30px 30px
    no-repeat;
}

.features .future .icon {
  opacity: 0.3;
}

.ticks {
  position: absolute;
  top: 8px;
  left: 5px;
  width: 20px;
  height: 6px;
}

.playhead {
  position: absolute;
  z-index: 1;
  top: 11px;
  left: 22px;
  width: 16px;
  height: 40px;
}
```
